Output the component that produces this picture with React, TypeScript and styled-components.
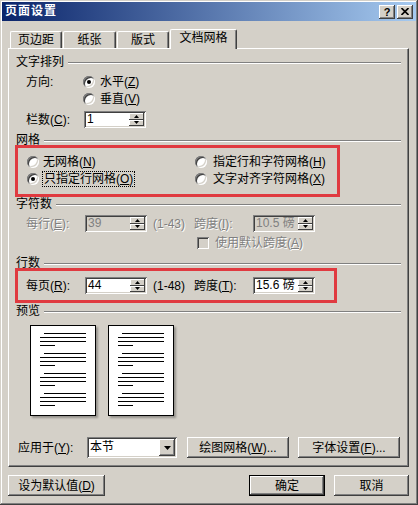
import React from "react";
import styled, { createGlobalStyle, css } from "styled-components";

const GlobalStyle = createGlobalStyle`
  html, body {
    margin: 0;
    padding: 0;
    background: #d4d0c8;
  }
  body {
    font-family: "Liberation Sans", "Noto Sans CJK SC", sans-serif;
    font-size: 12px;
    color: #000;
  }
  * {
    box-sizing: border-box;
  }
`;

const raised = css`
  box-shadow: inset -1px -1px 0 #404040, inset 1px 1px 0 #fff,
    inset -2px -2px 0 #808080, inset 2px 2px 0 #d4d0c8;
`;

const sunken = css`
  box-shadow: inset 1px 1px 0 #808080, inset -1px -1px 0 #fff,
    inset 2px 2px 0 #404040, inset -2px -2px 0 #d4d0c8;
`;

const Window = styled.div`
  width: 418px;
  height: 505px;
  padding: 2px;
  background: #d4d0c8;
  box-shadow: inset -1px -1px 0 #404040, inset 1px 1px 0 #d4d0c8,
    inset -2px -2px 0 #808080, inset 2px 2px 0 #fff;
  display: flex;
  flex-direction: column;
`;

const TitleBar = styled.div`
  height: 19px;
  display: flex;
  align-items: center;
  gap: 2px;
  padding: 0 3px 0 3px;
  background: linear-gradient(to right, #0a246a, #a6caf0);
`;

const TitleText = styled.span`
  flex: 1;
  color: #fff;
  font-weight: bold;
  font-size: 12px;
  letter-spacing: 1px;
  line-height: 19px;
`;

const CaptionButton = styled.div`
  width: 16px;
  height: 14px;
  background: #d4d0c8;
  ${raised};
  display: flex;
  align-items: center;
  justify-content: center;
  font-weight: bold;
  font-size: 11px;
  line-height: 14px;
`;

const Body = styled.div`
  padding: 8px 7px 0 6px;
`;

const TabStrip = styled.div`
  height: 19px;
  display: flex;
  align-items: flex-end;
  gap: 1px;
  padding-left: 2px;
`;

const Tab = styled.div<{ $w: number; $active?: boolean }>`
  width: ${(p) => p.$w}px;
  height: ${(p) => (p.$active ? 20 : 17)}px;
  margin-bottom: ${(p) => (p.$active ? -1 : 0)}px;
  position: relative;
  z-index: ${(p) => (p.$active ? 1 : 0)};
  background: #d4d0c8;
  border-top: 1px solid #fff;
  border-left: 1px solid #fff;
  border-right: 1px solid #404040;
  border-radius: 2px 2px 0 0;
  box-shadow: inset -1px 0 0 #808080;
  display: flex;
  align-items: center;
  justify-content: center;
  line-height: 14px;
  padding-bottom: ${(p) => (p.$active ? 3 : 0)}px;
`;

const Panel = styled.div`
  width: 401px;
  height: 419px;
  border-top: 1px solid #fff;
  border-left: 1px solid #fff;
  border-right: 1px solid #404040;
  border-bottom: 1px solid #404040;
  box-shadow: inset -1px -1px 0 #808080;
  padding: 7px 7px 0 7px;
  display: flex;
  flex-direction: column;
`;

const GroupHeader = styled.div<{ $mt: number }>`
  display: flex;
  align-items: center;
  height: 12px;
  line-height: 12px;
  margin-top: ${(p) => p.$mt}px;
  &::after {
    content: "";
    flex: 1;
    border-top: 1px solid #808080;
    border-bottom: 1px solid #fff;
    margin: 2px 0 0 4px;
  }
`;

const Row = styled.div<{ $h: number; $mt: number; $indent?: number }>`
  display: flex;
  align-items: center;
  height: ${(p) => p.$h}px;
  margin-top: ${(p) => p.$mt}px;
  padding-left: ${(p) => p.$indent ?? 0}px;
  line-height: 14px;
  white-space: nowrap;
`;

const Label = styled.span<{ $w: number; $disabled?: boolean }>`
  width: ${(p) => p.$w}px;
  flex: none;
  ${(p) =>
    p.$disabled &&
    css`
      color: #808080;
      text-shadow: 1px 1px 0 #fff;
    `}
`;

const Text = styled.span<{ $disabled?: boolean; $ml?: number }>`
  margin-left: ${(p) => p.$ml ?? 0}px;
  ${(p) =>
    p.$disabled &&
    css`
      color: #808080;
      text-shadow: 1px 1px 0 #fff;
    `}
`;

const Key = styled.u`
  text-decoration: underline;
`;

const Highlight = styled.div<{ $w: number; $pad: string }>`
  width: ${(p) => p.$w}px;
  margin: -1px 0 0 -1px;
  border: 3px solid #e03a40;
  padding: ${(p) => p.$pad};
  display: flex;
  flex-direction: column;
  gap: 1px;
`;

const RadioGrid = styled.div`
  display: grid;
  grid-template-columns: 168px auto;
  grid-auto-rows: 16px;
  row-gap: 1px;
  line-height: 14px;
  white-space: nowrap;
`;

const RadioItem = styled.div<{ $gap: number }>`
  display: flex;
  align-items: center;
  gap: ${(p) => p.$gap}px;
`;

const Radio = styled.span<{ $checked?: boolean }>`
  width: 12px;
  height: 12px;
  flex: none;
  border-radius: 50%;
  background: #fff;
  ${sunken};
  display: flex;
  align-items: center;
  justify-content: center;
  &::after {
    content: "";
    width: 4px;
    height: 4px;
    border-radius: 50%;
    background: ${(p) => (p.$checked ? "#000" : "transparent")};
  }
`;

const Focus = styled.span`
  outline: 1px dotted #000;
  outline-offset: 0;
  padding: 0 1px;
`;

const Checkbox = styled.span`
  width: 12px;
  height: 12px;
  flex: none;
  background: #d4d0c8;
  ${sunken};
  margin-right: 6px;
`;

const SpinField = styled.div<{ $w: number; $disabled?: boolean }>`
  width: ${(p) => p.$w}px;
  height: 17px;
  flex: none;
  padding: 2px;
  display: flex;
  background: ${(p) => (p.$disabled ? "#d4d0c8" : "#fff")};
  ${sunken};
`;

const SpinValue = styled.span<{ $disabled?: boolean }>`
  flex: 1;
  padding-left: 1px;
  line-height: 13px;
  overflow: hidden;
  color: ${(p) => (p.$disabled ? "#808080" : "#000")};
`;

const SpinButtons = styled.div`
  width: 15px;
  display: flex;
  flex-direction: column;
`;

const SpinButton = styled.div`
  flex: 1;
  background: #d4d0c8;
  box-shadow: inset -1px -1px 0 #404040, inset 1px 1px 0 #fff;
  display: flex;
  align-items: center;
  justify-content: center;
`;

const Combo = styled.div`
  width: 90px;
  height: 21px;
  flex: none;
  padding: 2px;
  display: flex;
  background: #fff;
  ${sunken};
`;

const ComboValue = styled.span`
  flex: 1;
  padding-left: 1px;
  line-height: 17px;
`;

const DropButton = styled.div`
  width: 16px;
  background: #d4d0c8;
  ${raised};
  display: flex;
  align-items: center;
  justify-content: center;
`;

const PushButton = styled.div<{ $w: number; $default?: boolean; $ml?: number }>`
  width: ${(p) => p.$w}px;
  height: 21px;
  flex: none;
  margin-left: ${(p) => p.$ml ?? 0}px;
  background: #d4d0c8;
  display: flex;
  align-items: center;
  justify-content: center;
  line-height: 14px;
  white-space: nowrap;
  ${(p) =>
    p.$default
      ? css`
          box-shadow: inset 0 0 0 1px #000, inset -2px -2px 0 #404040,
            inset 2px 2px 0 #fff, inset -3px -3px 0 #808080;
        `
      : raised};
`;

const Previews = styled.div`
  display: flex;
  gap: 12px;
  height: 91px;
  margin-top: 8px;
  padding-left: 14px;
`;

const Page = styled.div`
  width: 66px;
  height: 91px;
  background: #fff;
  border: 1px solid #000;
  box-shadow: 2px 2px 2px rgba(0, 0, 0, 0.3);
  padding: 7px 0 0 9px;
  display: flex;
  flex-direction: column;
  gap: 7px;
`;

const Para = styled.div`
  display: flex;
  flex-direction: column;
  gap: 3px;
`;

const PageLine = styled.div<{ $indent: number; $w: number }>`
  height: 1px;
  margin-left: ${(p) => p.$indent}px;
  width: ${(p) => p.$w}px;
  background: #000;
`;

const ButtonRow = styled.div`
  display: flex;
  margin-top: 8px;
`;

const Spacer = styled.div`
  flex: 1;
`;

const paraLines = [
  { indent: 4, w: 42 },
  { indent: 0, w: 46 },
  { indent: 0, w: 46 },
  { indent: 0, w: 15 },
];

const UpArrow = () => (
  <svg width="5" height="3" viewBox="0 0 5 3">
    <path d="M2.5 0 L5 3 L0 3 Z" fill="#000" />
  </svg>
);

const DownArrow = ({ w = 5, h = 3 }: { w?: number; h?: number }) => (
  <svg width={w} height={h} viewBox={`0 0 ${w} ${h}`}>
    <path d={`M0 0 L${w} 0 L${w / 2} ${h} Z`} fill="#000" />
  </svg>
);

const Spin = ({ value, disabled, w = 62 }: { value: string; disabled?: boolean; w?: number }) => (
  <SpinField $w={w} $disabled={disabled}>
    <SpinValue $disabled={disabled}>{value}</SpinValue>
    <SpinButtons>
      <SpinButton>
        <UpArrow />
      </SpinButton>
      <SpinButton>
        <DownArrow />
      </SpinButton>
    </SpinButtons>
  </SpinField>
);

const PreviewPage = () => (
  <Page>
    {[0, 1, 2, 3].map((i) => (
      <Para key={i}>
        {paraLines.map((l, j) => (
          <PageLine key={j} $indent={l.indent} $w={l.w} />
        ))}
      </Para>
    ))}
  </Page>
);

const tabs = [
  { label: "页边距", w: 52 },
  { label: "纸张", w: 53 },
  { label: "版式", w: 52 },
  { label: "文档网格", w: 67, active: true },
];

export default function App() {
  return (
    <>
      <GlobalStyle />
      <Window>
        <TitleBar>
          <TitleText>页面设置</TitleText>
          <CaptionButton>?</CaptionButton>
          <CaptionButton>
            <svg width="8" height="7" viewBox="0 0 8 7">
              <path d="M0.5 0 L7.5 7 M7.5 0 L0.5 7" stroke="#000" strokeWidth="1.6" />
            </svg>
          </CaptionButton>
        </TitleBar>
        <Body>
          <TabStrip>
            {tabs.map((t) => (
              <Tab key={t.label} $w={t.w} $active={t.active}>
                {t.label}
              </Tab>
            ))}
          </TabStrip>
          <Panel>
            <GroupHeader $mt={0}>文字排列</GroupHeader>
            <Row $h={16} $mt={6} $indent={10}>
              <Label $w={57}>方向:</Label>
              <Radio $checked />
              <Text $ml={5}>
                水平(<Key>Z</Key>)
              </Text>
            </Row>
            <Row $h={16} $mt={1} $indent={67}>
              <Radio />
              <Text $ml={5}>
                垂直(<Key>V</Key>)
              </Text>
            </Row>
            <Row $h={17} $mt={4} $indent={10}>
              <Label $w={58}>
                栏数(<Key>C</Key>):
              </Label>
              <Spin value="1" />
            </Row>

            <GroupHeader $mt={6}>网格</GroupHeader>
            <Highlight $w={325} $pad="6px 0 7px 9px">
              <RadioGrid>
                <RadioItem $gap={4}>
                  <Radio />
                  <span>
                    无网格(<Key>N</Key>)
                  </span>
                </RadioItem>
                <RadioItem $gap={6}>
                  <Radio />
                  <span>
                    指定行和字符网格(<Key>H</Key>)
                  </span>
                </RadioItem>
                <RadioItem $gap={4}>
                  <Radio $checked />
                  <Focus>
                    只指定行网格(<Key>O</Key>)
                  </Focus>
                </RadioItem>
                <RadioItem $gap={6}>
                  <Radio />
                  <span>
                    文字对齐字符网格(<Key>X</Key>)
                  </span>
                </RadioItem>
              </RadioGrid>
            </Highlight>

            <GroupHeader $mt={1}>字符数</GroupHeader>
            <Row $h={17} $mt={5} $indent={10}>
              <Label $w={59} $disabled>
                每行(<Key>E</Key>):
              </Label>
              <Spin value="39" disabled />
              <Label $w={47} $disabled style={{ paddingLeft: 6 }}>
                (1-43)
              </Label>
              <Label $w={59} $disabled>
                跨度(<Key>I</Key>):
              </Label>
              <Spin value="10.5 磅" disabled />
            </Row>
            <Row $h={12} $mt={5} $indent={181}>
              <Checkbox />
              <Text $disabled>
                使用默认跨度(<Key>A</Key>)
              </Text>
            </Row>

            <GroupHeader $mt={8}>行数</GroupHeader>
            <Highlight $w={322} $pad="6px 0 6px 8px">
              <Row $h={17} $mt={0}>
                <Label $w={59}>
                  每页(<Key>R</Key>):
                </Label>
                <Spin value="44" />
                <Label $w={47} style={{ paddingLeft: 6 }}>
                  (1-48)
                </Label>
                <Label $w={59}>
                  跨度(<Key>T</Key>):
                </Label>
                <Spin value="15.6 磅" />
              </Row>
            </Highlight>

            <GroupHeader $mt={2}>预览</GroupHeader>
            <Previews>
              <PreviewPage />
              <PreviewPage />
            </Previews>

            <Row $h={21} $mt={21} $indent={2}>
              <Label $w={69}>
                应用于(<Key>Y</Key>):
              </Label>
              <Combo>
                <ComboValue>本节</ComboValue>
                <DropButton>
                  <DownArrow w={7} h={4} />
                </DropButton>
              </Combo>
              <PushButton $w={102} $ml={10}>
                绘图网格(<Key>W</Key>)...
              </PushButton>
              <PushButton $w={102} $ml={9}>
                字体设置(<Key>F</Key>)...
              </PushButton>
            </Row>
          </Panel>
          <ButtonRow>
            <PushButton $w={97}>
              设为默认值(<Key>D</Key>)
            </PushButton>
            <Spacer />
            <PushButton $w={76} $default>
              确定
            </PushButton>
            <PushButton $w={75} $ml={9}>
              取消
            </PushButton>
          </ButtonRow>
        </Body>
      </Window>
    </>
  );
}
